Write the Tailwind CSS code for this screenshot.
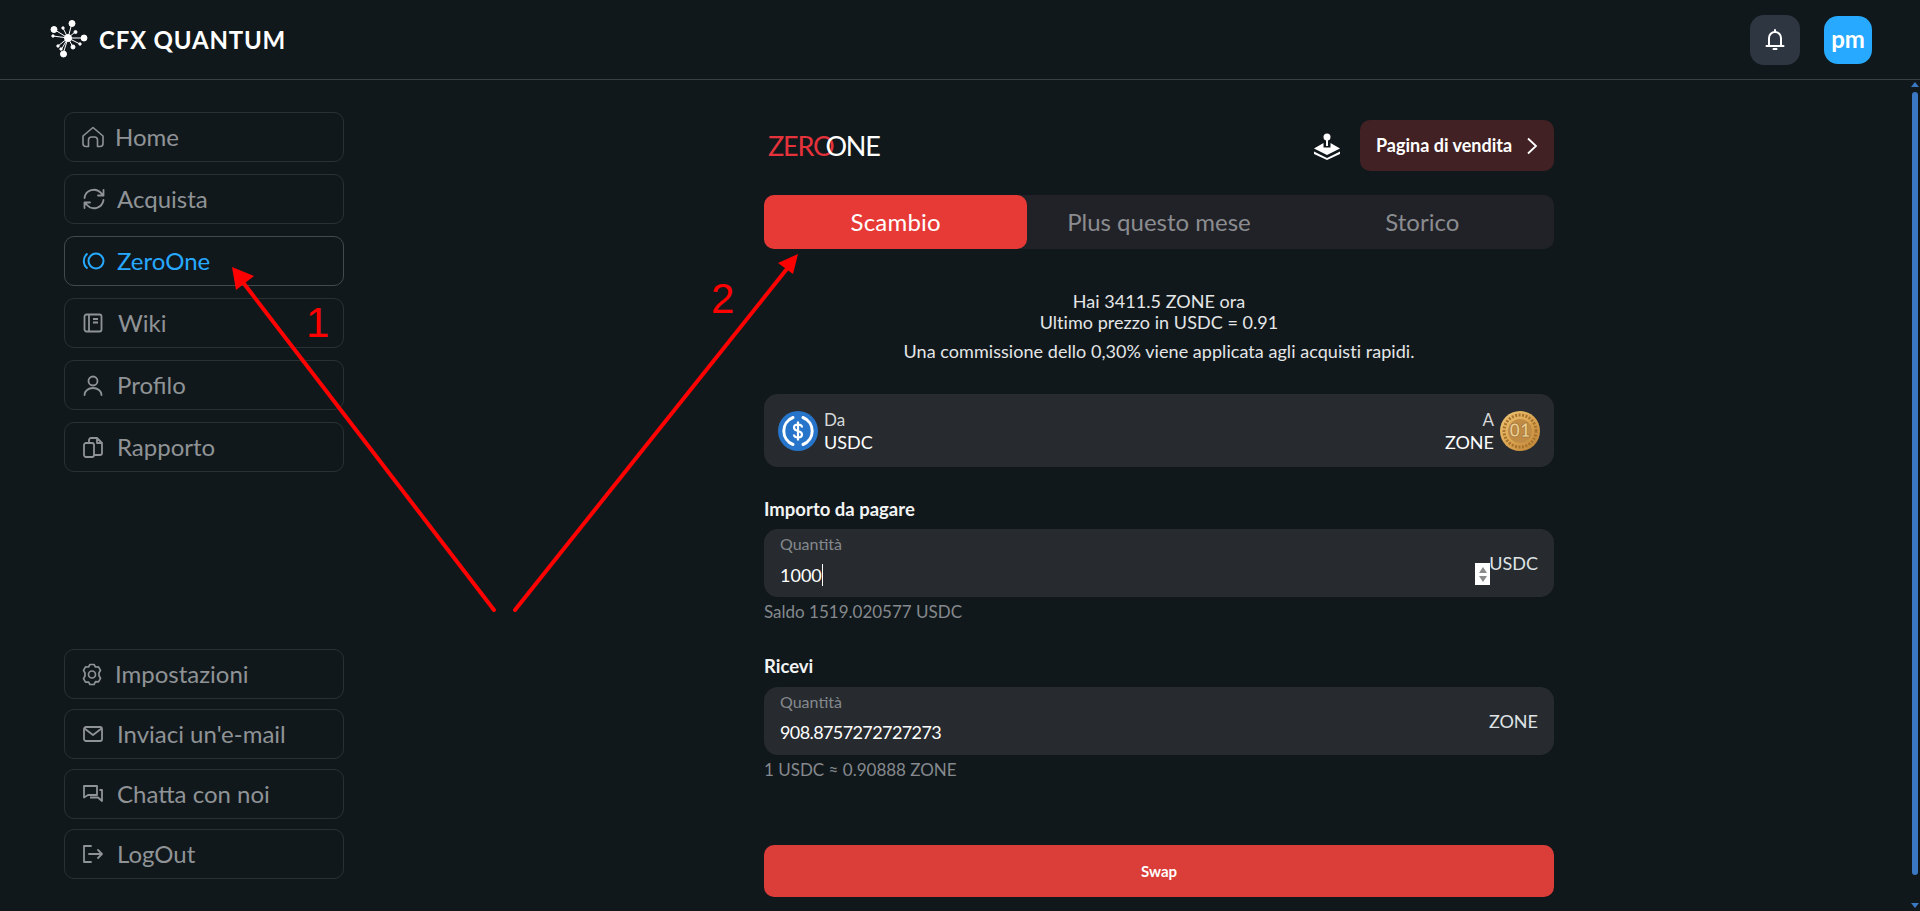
<!DOCTYPE html>
<html lang="en">
<head>
    <meta charset="UTF-8">
    <title>CFX Quantum</title>
    <script src="https://cdn.jsdelivr.net/npm/@tailwindcss/browser@4"></script>
</head>
<body class="bg-[#11181c] h-[911px] overflow-hidden font-['Lato','Open_Sans',sans-serif] text-white relative">
    <!-- Header -->
    <header class="h-[80px] border-b border-[#3a3f42] flex items-center justify-between pl-[49px] pr-[48px]">
        <div class="flex items-center gap-[10px]">
            <svg width="40" height="40" viewBox="0 0 40 40" fill="white" stroke="white" stroke-width="1">
                <path d="M19 18 L23 3 M19 18 L6 10 M19 18 L35 18 M19 18 L14 34 M19 18 L9 26 M19 18 L26 12 M19 18 L14 8 M19 18 L31 24 M19 18 L4 16 M19 18 L12 30 M19 18 L24 27"/>
                <circle cx="19" cy="18" r="3.5"/>
                <circle cx="23" cy="3.5" r="3"/><circle cx="5" cy="9.5" r="3"/><circle cx="35" cy="18" r="3"/><circle cx="14.5" cy="34" r="3"/>
                <circle cx="14" cy="8" r="1.2"/><circle cx="26.5" cy="12" r="1.5"/><circle cx="4" cy="16" r="1.2"/><circle cx="9" cy="26" r="1.2"/><circle cx="12" cy="29" r="1.2"/><circle cx="24" cy="27" r="2"/><circle cx="31" cy="24" r="1.2"/>
            </svg>
            <span class="text-[24px] font-bold tracking-[0.8px]">CFX QUANTUM</span>
        </div>
        <div class="flex items-center gap-[24px]">
            <div class="w-[50px] h-[50px] rounded-[14px] bg-[#2e3642] flex items-center justify-center">
                <svg width="20" height="23" viewBox="0 0 20 23" fill="none" stroke="white" stroke-width="2" stroke-linecap="round" stroke-linejoin="round">
                    <path d="M1.500 18h17M4 18v-8a6 6 0 0 1 12 0v8M10 2v2M8.500 21h3"/>
                </svg>
            </div>
            <div class="w-[48px] h-[48px] rounded-[14px] bg-[#26a9ff] flex items-center justify-center text-[24px] font-bold leading-none pb-[2px]">pm</div>
        </div>
    </header>

    <div class="flex">
        <!-- Sidebar -->
        <aside class="w-[344px] pl-[64px] pt-[32px] h-[831px] flex flex-col justify-between pb-[32px] text-[24px] text-[#8f9396]">
            <nav class="flex flex-col gap-[12px]">
                <a class="h-[50px] w-[280px] rounded-[10px] border border-[#2b3033] flex items-center pl-[16px] gap-[10px]">
                    <svg width="24" height="24" viewBox="0 0 24 24" fill="none" stroke="currentColor" stroke-width="1.6" stroke-linejoin="round"><path d="M2 11 12 2.500 22 11v7.500a3 3 0 0 1-3 3h-2.500V15a3 3 0 0 0-3-3h-3a3 3 0 0 0-3 3v6.500H5a3 3 0 0 1-3-3z"/></svg>
                    Home
                </a>
                <a class="h-[50px] w-[280px] rounded-[10px] border border-[#2b3033] flex items-center pl-[18px] gap-[12px]">
                    <svg width="22" height="22" viewBox="0 0 22 22" fill="none" stroke="currentColor" stroke-width="1.8" stroke-linecap="round" stroke-linejoin="round"><path d="M1.500 10A9.500 9.500 0 0 1 18 5l2.500 2.500M20.500 2v5.500h-5.500M20.500 12A9.500 9.500 0 0 1 4 17l-2.500-2.500M1.500 20v-5.500H7"/></svg>
                    Acquista
                </a>
                <a class="h-[50px] w-[280px] rounded-[10px] border border-[#44494c] flex items-center pl-[17px] gap-[12px] text-[#26a9ff]">
                    <svg width="23" height="18" viewBox="0 0 23 18" fill="none" stroke="currentColor" stroke-width="2"><circle cx="14" cy="9" r="7.500"/><path d="M5.500 1.500a9.500 9.500 0 0 0 0 15"/></svg>
                    ZeroOne
                </a>
                <a class="h-[50px] w-[280px] rounded-[10px] border border-[#2b3033] flex items-center pl-[18px] gap-[15px]">
                    <svg width="20" height="20" viewBox="0 0 20 20" fill="none" stroke="currentColor" stroke-width="1.800" stroke-linejoin="round"><rect x="1.500" y="1.500" width="17" height="17" rx="2"/><path d="M6 1.500v17M10 6h5M10 9.500h5"/></svg>
                    Wiki
                </a>
                <a class="h-[50px] w-[280px] rounded-[10px] border border-[#2b3033] flex items-center pl-[18px] gap-[14px]">
                    <svg width="20" height="21" viewBox="0 0 20 21" fill="none" stroke="currentColor" stroke-width="1.800" stroke-linecap="round"><circle cx="10" cy="6" r="4.500"/><path d="M1.500 20a8.500 7 0 0 1 17 0"/></svg>
                    Profilo
                </a>
                <a class="h-[50px] w-[280px] rounded-[10px] border border-[#2b3033] flex items-center pl-[18px] gap-[14px]">
                    <svg width="20" height="21" viewBox="0 0 20 21" fill="none" stroke="currentColor" stroke-width="1.800" stroke-linejoin="round"><rect x="1" y="6" width="10" height="14" rx="2"/><path d="M6 6V3a2 2 0 0 1 2-2h6l5 5v10a2 2 0 0 1-2 2h-6M14 1v5h5"/></svg>
                    Rapporto
                </a>
            </nav>
            <nav class="flex flex-col gap-[10px]">
                <a class="h-[50px] w-[280px] rounded-[10px] border border-[#2b3033] flex items-center pl-[16px] gap-[12px]">
                    <svg width="22" height="23" viewBox="0 0 22 23" fill="none" stroke="currentColor" stroke-width="1.700" stroke-linejoin="round"><circle cx="11" cy="11.500" r="3.500"/><path d="M9 1.500h4l1.500 2.500 3-.2 2 3.500-1.500 2.500v3l1.500 2.500-2 3.500-3-.2L13 21.500H9L7.500 19l-3 .2-2-3.500L4 13v-3L2.500 7.300l2-3.500 3 .2z"/></svg>
                    Impostazioni
                </a>
                <a class="h-[50px] w-[280px] rounded-[10px] border border-[#2b3033] flex items-center pl-[18px] gap-[14px]">
                    <svg width="20" height="16" viewBox="0 0 20 16" fill="none" stroke="currentColor" stroke-width="1.800" stroke-linejoin="round"><rect x="1" y="1" width="18" height="14" rx="2"/><path d="M1.500 2.500 10 9l8.500-6.500"/></svg>
                    Inviaci un'e-mail
                </a>
                <a class="h-[50px] w-[280px] rounded-[10px] border border-[#2b3033] flex items-center pl-[18px] gap-[14px]">
                    <svg width="20" height="18" viewBox="0 0 20 18" fill="none" stroke="currentColor" stroke-width="1.800" stroke-linejoin="round"><path d="M1 1h13v9H5l-4 2.500zM7 12.500h8l4 3.500V5h-2.500"/></svg>
                    Chatta con noi
                </a>
                <a class="h-[50px] w-[280px] rounded-[10px] border border-[#2b3033] flex items-center pl-[18px] gap-[14px]">
                    <svg width="20" height="18" viewBox="0 0 20 18" fill="none" stroke="currentColor" stroke-width="1.800" stroke-linecap="round" stroke-linejoin="round"><path d="M8 1H1v16h7M6 9h13M15 5l4 4-4 4"/></svg>
                    LogOut
                </a>
            </nav>
        </aside>

        <!-- Main -->
        <main class="ml-[420px] w-[790px] pt-[40px]">
            <div class="flex items-center justify-between h-[51px]">
                <div class="flex items-center text-[27px] leading-none font-normal pl-[4px] tracking-[-1.2px]">
                    <span class="text-[#e5323b]">ZERO</span><span class="-ml-[8px]">ONE</span>
                </div>
                <div class="flex items-center gap-[19px]">
                    <svg width="28" height="28" viewBox="0 0 28 28" fill="white">
                        <circle cx="14" cy="5" r="3.500"/>
                        <path d="M13 8h2v6h-2z"/>
                        <path d="M10.500 11 1 16.500 14 23l13-6.500-9.500-5.500v4.500h-7z"/>
                        <path d="M1 19.500 14 26l13-6.500v2.500L14 28 1 22z"/>
                    </svg>
                    <button class="w-[194px] h-[51px] rounded-[10px] bg-[#412123] flex items-center justify-between pl-[16px] pr-[16px] text-[18px] font-bold">
                        Pagina di vendita
                        <svg width="12" height="18" viewBox="0 0 12 18" fill="none" stroke="white" stroke-width="1.800"><path d="M2 1.500 10 9l-8 7.500"/></svg>
                    </button>
                </div>
            </div>

            <div class="mt-[24px] grid grid-cols-3 h-[54px] rounded-[10px] bg-[#212227] text-[24px] text-[#8b8c90] text-center">
                <div class="bg-[#e73a37] rounded-[10px] flex items-center justify-center text-white tracking-[0.2px]">Scambio</div>
                <div class="flex items-center justify-center">Plus questo mese</div>
                <div class="flex items-center justify-center">Storico</div>
            </div>

            <div class="mt-[42px] text-center text-[18px] tracking-[0.05px] text-[#e4e6e7] leading-[21px]">
                <p>Hai 3411.5 ZONE ora</p>
                <p>Ultimo prezzo in USDC = 0.91</p>
                <p class="mt-[8px]">Una commissione dello 0,30% viene applicata agli acquisti rapidi.</p>
            </div>

            <div class="mt-[32px] h-[73px] rounded-[14px] bg-[#272b2f] flex items-center justify-between px-[14px]">
                <div class="flex items-center gap-[6px]">
                    <svg width="40" height="40" viewBox="0 0 40 40">
                        <circle cx="20" cy="20" r="20" fill="#2775ca"/>
                        <path d="M15 6.500a14.500 14.500 0 0 0 0 27M25 6.500a14.500 14.500 0 0 1 0 27" fill="none" stroke="white" stroke-width="3" stroke-linecap="round"/>
                        <path d="M24 16.500c0-2-1.800-3-4-3s-4 1-4 3 1.800 3 4 3.500 4 1.500 4 3.500-1.800 3-4 3-4-1-4-3M20 10.500v19" fill="none" stroke="white" stroke-width="2.200"/>
                    </svg>
                    <div class="text-[17px] leading-[22px]">
                        <div class="text-[#d6d8d9]">Da</div>
                        <div class="text-[18px]">USDC</div>
                    </div>
                </div>
                <div class="flex items-center gap-[6px]">
                    <div class="text-[17px] leading-[22px] text-right">
                        <div class="text-[#d6d8d9]">A</div>
                        <div class="text-[18px]">ZONE</div>
                    </div>
                    <svg width="40" height="40" viewBox="0 0 40 40">
                        <defs>
                            <linearGradient id="coin" x1="0" y1="0" x2="1" y2="1">
                                <stop offset="0" stop-color="#efc777"/>
                                <stop offset="0.55" stop-color="#d9a24e"/>
                                <stop offset="1" stop-color="#b97f33"/>
                            </linearGradient>
                        </defs>
                        <circle cx="20" cy="20" r="20" fill="url(#coin)"/>
                        <circle cx="20" cy="20" r="16" fill="none" stroke="#a8732e" stroke-width="3" stroke-dasharray="2 1.500"/>
                        <circle cx="20" cy="20" r="12" fill="#c08c45"/>
                        <text x="20" y="26" text-anchor="middle" font-family="Lato" font-size="18" font-weight="900" fill="#edcf94" stroke="#8f5f24" stroke-width="0.5">01</text>
                    </svg>
                </div>
            </div>

            <label class="block mt-[32px] text-[18.500px] font-bold leading-[20px] text-[#f2f3f3]">Importo da pagare</label>
            <div class="relative mt-[10px] h-[68px] rounded-[14px] bg-[#272b2f] pl-[16px]">
                <div class="pt-[5px] text-[16px] leading-[20px] text-[#85898d]">Quantità</div>
                <div class="mt-[9px] flex items-center text-[18px] leading-[24px] h-[24px]">1000<span class="w-px h-[22px] bg-white"></span></div>
                <div class="absolute right-[64px] top-[34px] w-[15px] h-[22px] bg-white flex flex-col items-center justify-center gap-[3px]">
                    <span class="border-x-[4px] border-x-transparent border-b-[6px] border-b-[#8a8a8a]"></span>
                    <span class="border-x-[4px] border-x-transparent border-t-[6px] border-t-[#8a8a8a]"></span>
                </div>
                <div class="absolute right-[16px] top-[22px] text-[18px] leading-[24px] text-[#dfe3e5]">USDC</div>
            </div>
            <p class="mt-[5px] text-[17px] leading-[20px] text-[#85898d]">Saldo 1519.020577 USDC</p>

            <label class="block mt-[34px] text-[18.500px] font-bold leading-[20px] text-[#f2f3f3]">Ricevi</label>
            <div class="relative mt-[11px] h-[68px] rounded-[14px] bg-[#272b2f] pl-[16px]">
                <div class="pt-[5px] text-[16px] leading-[20px] text-[#85898d]">Quantità</div>
                <div class="mt-[8px] text-[18px] tracking-[-0.6px] leading-[24px]">908.8757272727273</div>
                <div class="absolute right-[16px] top-[22px] text-[18px] leading-[24px] text-[#dfe3e5]">ZONE</div>
            </div>
            <p class="mt-[5px] text-[17px] leading-[20px] text-[#85898d]">1 USDC ≈ 0.90888 ZONE</p>

            <button class="mt-[65px] w-full h-[52px] rounded-[10px] bg-[#db3d39] text-[15px] font-bold">Swap</button>
        </main>
    </div>

    <!-- Scrollbar -->
    <div class="absolute right-[2px] top-[80px] bottom-0 w-[6px]">
        <span class="absolute -left-[1px] top-[2px] border-x-[4px] border-x-transparent border-b-[5px] border-b-[#3b78c4]"></span>
        <div class="absolute left-0 top-[12px] h-[783px] w-[6px] rounded-[3px] bg-[#3b78c4]"></div>
        <span class="absolute -left-[1px] bottom-[3px] border-x-[4px] border-x-transparent border-t-[5px] border-t-[#3b78c4]"></span>
    </div>

    <!-- Annotation arrows drawn on top of the screenshot -->
    <svg class="absolute left-0 top-0 pointer-events-none" width="1920" height="911" viewBox="0 0 1920 911" fill="none">
        <path d="M494 610 242 281" stroke="#f00" stroke-width="4" stroke-linecap="round"/>
        <path d="M232 267 236 290 254 276z" fill="#f00"/>
        <path d="M515 610 786 270" stroke="#f00" stroke-width="4" stroke-linecap="round"/>
        <path d="M798 254 778 263 793 274z" fill="#f00"/>
        <text x="306" y="337" font-family="Liberation Sans" font-size="42" fill="#f00">1</text>
        <text x="711" y="313" font-family="Liberation Sans" font-size="42" fill="#f00">2</text>
    </svg>
</body>
</html>
